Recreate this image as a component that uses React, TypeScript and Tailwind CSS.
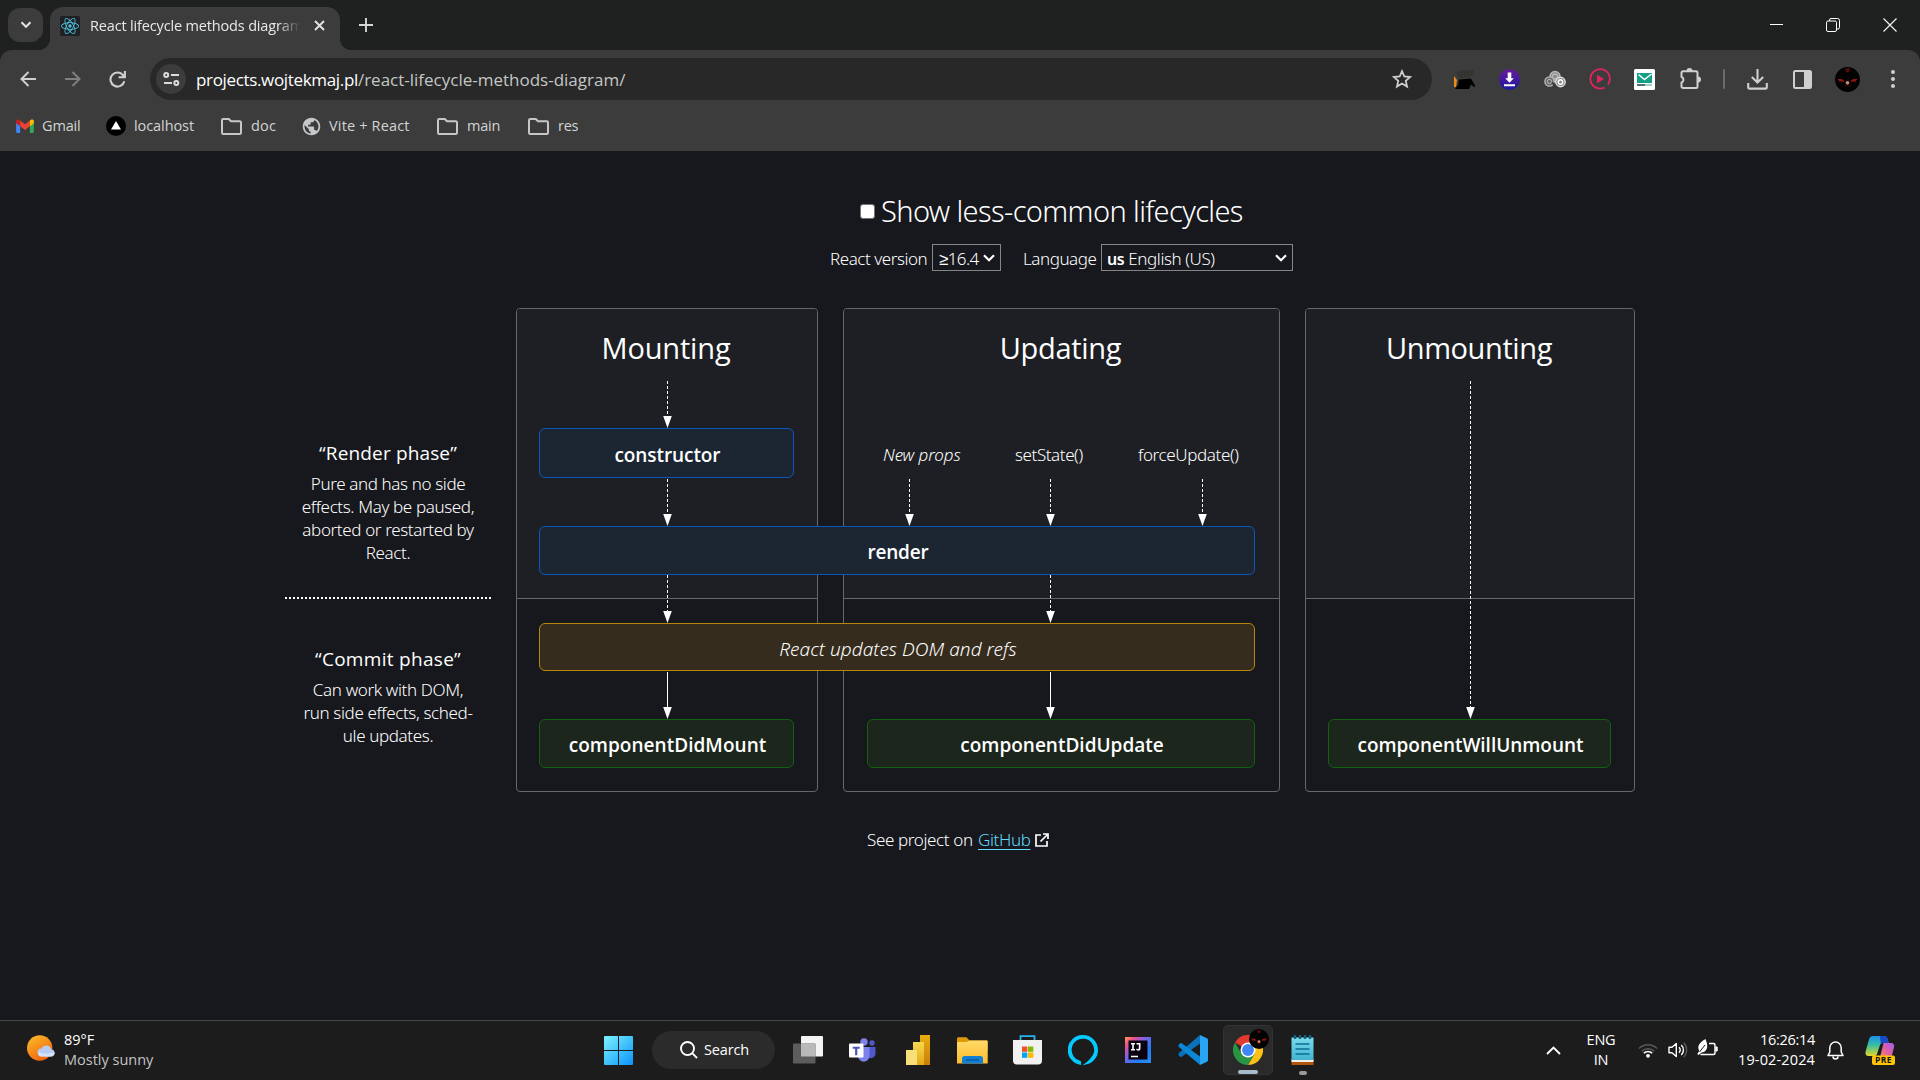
import type { ReactNode } from "react";
import { SiReact } from "react-icons/si";
import { MdPublic } from "react-icons/md";

/* ---------- small shared drawings ---------- */

function Avatar({ size }: { size: number }) {
  return (
    <svg width={size} height={size} viewBox="0 0 26 26">
      <circle cx="13" cy="13" r="13" fill="#020202" />
      <path d="M10.500 1.500h5l-1 4h-3z" fill="#5a0a0e" />
      <path d="M2.500 12.500 7 12.500l3 2-1 1.200-4-.7zM23.500 12.500 19 12.500l-3 2 1 1.200 4-.7z" fill="#8f1713" />
      <path d="M4 15.500l5-.5M22 15.500l-5-.5" stroke="#5c0a0a" />
      <circle cx="13" cy="16.500" r="1.900" fill="#c98a72" />
      <path d="M10 19.500h6" stroke="#3d0909" strokeWidth="1.200" />
    </svg>
  );
}

function Folder() {
  return (
    <svg width="21" height="17" viewBox="0 0 21 17" fill="none" stroke="#c7c7c7" strokeWidth="2" strokeLinejoin="round">
      <path d="M1 2.200C1 1.500 1.500 1 2.200 1h5.600l2.200 2.300h8.800c.7 0 1.200.5 1.200 1.200v10.300c0 .7-.5 1.200-1.200 1.200H2.200C1.500 16 1 15.500 1 14.800z" />
    </svg>
  );
}

function SelectChevron() {
  return (
    <svg width="12" height="8" viewBox="0 0 12 8" fill="none" stroke="#fff" strokeWidth="2.200">
      <path d="M1 1.200l5 5 5-5" />
    </svg>
  );
}

/* ---------- browser chrome ---------- */

function TabStrip() {
  return (
    <div className="flex h-[50px] shrink-0 bg-[#1f2020]">
      <div className="ml-2 mt-2 flex h-[34px] w-[35px] items-center justify-center rounded-[12px] bg-[#3c3c3c]">
        <svg width="12" height="8" viewBox="0 0 12 8" fill="none" stroke="#e3e3e3" strokeWidth="2">
          <path d="M1.500 1.300l4.500 4.500 4.500-4.500" />
        </svg>
      </div>
      <div className="flex w-[7px] flex-col justify-end">
        <div className="-ml-[5px] h-3 w-3 bg-[radial-gradient(circle_at_0_0,#1f2020_12px,#3c3c3c_12.500px)]" />
      </div>
      <div className="mt-[7px] flex h-[43px] w-[290px] items-center rounded-t-[13px] bg-[#3c3c3c] pb-[6px] pl-[10px]">
        <div className="flex h-5 w-5 items-center justify-center rounded-[2px] bg-[#1f2023]">
          <SiReact size={18} color="#4fc3e0" />
        </div>
        <div className="ml-[10px] w-[210px] overflow-hidden whitespace-nowrap text-[14.500px] leading-5 tracking-[-0.160px] text-[#e8e8e8] [mask-image:linear-gradient(90deg,#000_188px,transparent_210px)]">
          React lifecycle methods diagram
        </div>
        <svg className="ml-[14px]" width="11" height="11" viewBox="0 0 11 11" stroke="#e3e3e3" strokeWidth="1.900">
          <path d="M1 1l9 9M10 1l-9 9" />
        </svg>
      </div>
      <div className="flex flex-col justify-end">
        <div className="h-3 w-3 bg-[radial-gradient(circle_at_100%_0,#1f2020_12px,#3c3c3c_12.500px)]" />
      </div>
      <svg className="ml-[7px] mt-[18px]" width="14" height="14" viewBox="0 0 14 14" stroke="#d6d6d6" strokeWidth="1.900">
        <path d="M7 0v14M0 7h14" />
      </svg>
      <div className="ml-auto mt-[18px] flex h-[14px] pr-[22px]">
        <svg width="13" height="14" viewBox="0 0 13 14"><path d="M0 6.500h13" stroke="#fff" /></svg>
        <svg className="ml-[43px]" width="14" height="14" viewBox="0 0 14 14" fill="none" stroke="#fff">
          <rect x=".5" y="3" width="10" height="10.500" rx="1.500" />
          <path d="M3.500 3V2A1.500 1.500 0 0 1 5 .500h6.500A2 2 0 0 1 13.500 2.500v7A1.500 1.500 0 0 1 12 11h-1" />
        </svg>
        <svg className="ml-[43px] mr-px" width="14" height="14" viewBox="0 0 14 14" stroke="#f2f2f2" strokeWidth="1.200">
          <path d="M.5.500l13 13M13.500.500l-13 13" />
        </svg>
      </div>
    </div>
  );
}

function Cell({ children }: { children: ReactNode }) {
  return <div className="flex w-[45px] shrink-0 items-center justify-center">{children}</div>;
}

function Toolbar() {
  return (
    <div className="bg-[#1f2020]">
      <div className="flex h-[58px] items-center rounded-t-[12px] bg-[#3c3c3c] pl-[5px]">
        <Cell>
          <svg width="16" height="16" viewBox="0 0 16 16" fill="none" stroke="#cfcfcf" strokeWidth="2"><path d="M16 8H1.500M8.500 1L1.500 8l7 7" /></svg>
        </Cell>
        <Cell>
          <svg width="16" height="16" viewBox="0 0 16 16" fill="none" stroke="#7f7f7f" strokeWidth="2"><path d="M0 8h14.500M7.500 1l7 7-7 7" /></svg>
        </Cell>
        <Cell>
          <svg width="17" height="17" viewBox="0 0 17 17" fill="none" stroke="#cfcfcf" strokeWidth="2.100"><path d="M15.300 10.200A7 7 0 1 1 14 4.200l1.200 1.600M15.900 0v6.300H9.600" /></svg>
        </Cell>
        <div className="ml-[10px] flex h-[42px] w-[1282px] items-center rounded-full bg-[#282828] pl-[6px]">
          <div className="flex size-[30px] items-center justify-center rounded-full bg-[#3c3c3c]">
            <svg width="17" height="14" viewBox="0 0 17 14" fill="none" stroke="#dcdcdc" strokeWidth="2">
              <circle cx="3.200" cy="3" r="2" /><path d="M8 3h8M1 11h8" /><circle cx="13.300" cy="11" r="2" />
            </svg>
          </div>
          <div className="ml-[10px] pt-px text-[17px] leading-6">
            <span className="tracking-[-0.340px] text-white">projects.wojtekmaj.pl</span>
            <span className="text-[#c4c7c5]">/react-lifecycle-methods-diagram/</span>
          </div>
          <svg className="ml-auto mr-[20px]" width="20" height="20" viewBox="0 0 20 20" fill="none" stroke="#cfcfcf" strokeWidth="1.800">
            <path d="M10 2.200l2.350 5.300 5.750.55-4.350 3.850 1.300 5.700L10 14.600l-5.050 3 1.300-5.700L1.900 8.050l5.750-.55z" />
          </svg>
        </div>
        <div className="ml-[10px] mr-px flex">
          <Cell>
            <svg width="22" height="22" viewBox="0 0 22 22">
              <path d="M3 4l7-2 5 1 5-1-1 5-6 3H6L3 8z" fill="#333332" />
              <path d="M0 8l3 4-1 7H0z" fill="#f08a12" />
              <path d="M5 11.500l12-1 4 7v2l-4-3-2 4.500H1l3-4z" fill="#000" />
            </svg>
          </Cell>
          <Cell>
            <svg width="21" height="21" viewBox="0 0 21 21">
              <defs><linearGradient id="dl" x2="0" y2="1"><stop stopColor="#6a1b9a" /><stop offset="1" stopColor="#1a1a9c" /></linearGradient></defs>
              <circle cx="10.500" cy="10.500" r="10.500" fill="url(#dl)" />
              <path d="M8.700 3.500h3.600v5.700h2.500l-4.300 4.600-4.300-4.600h2.500zM5 15.300h11v1.900H5z" fill="#fff" />
            </svg>
          </Cell>
          <Cell>
            <svg width="22" height="18" viewBox="0 0 22 18" fill="none" stroke="#b9b9b9" strokeWidth="1.400">
              <circle cx="11" cy="6.500" r="5" fill="#8a8a8a" /><circle cx="11" cy="6.500" r="2.600" stroke="#d0d0d0" strokeWidth="1" />
              <circle cx="5.500" cy="11.500" r="4.600" fill="#6a6a6a" /><circle cx="5.500" cy="11.500" r="2.200" strokeWidth="1" />
              <circle cx="16.500" cy="12" r="4.700" fill="#8a8a8a" stroke="#e0e0e0" /><circle cx="16.500" cy="12" r="2.200" stroke="#fff" />
              <path d="M8 12.500l5 5" stroke="#3c3c3c" strokeWidth="2" />
            </svg>
          </Cell>
          <Cell>
            <svg width="22" height="22" viewBox="0 0 22 22" fill="none">
              <path d="M15.500 19.500A9.700 9.700 0 1 1 19 16.500" stroke="#e0245e" strokeWidth="1.800" />
              <path d="M8 6.500v9l7-4.500z" fill="#e0245e" />
            </svg>
          </Cell>
          <Cell>
            <svg width="21" height="21" viewBox="0 0 21 21">
              <rect width="21" height="21" rx="1.500" fill="#fff" />
              <rect x="3" y="4" width="15" height="10" fill="#14a085" />
              <path d="M4.500 5.500l6 5 7-5.500" fill="none" stroke="#fff" strokeWidth="1.500" />
              <path d="M3 16h8" stroke="#33475b" strokeWidth="1.600" /><path d="M11 16h7" stroke="#7fcabb" strokeWidth="1.600" />
            </svg>
          </Cell>
          <Cell>
            <svg width="22" height="22" viewBox="0 0 22 22">
              <path d="M2.500 9V4.800C2.500 3.900 3.200 3.300 4 3.300h13c.8 0 1.500.6 1.500 1.500V18.500c0 .8-.7 1.500-1.500 1.500H4c-.8 0-1.500-.7-1.500-1.500V14.500a2.900 2.900 0 0 0 0-5.500z" fill="none" stroke="#cfcfcf" strokeWidth="2" strokeLinejoin="round" />
              <path d="M7.500 3a3 3 0 0 1 6 0zM19 8.500a3 3 0 0 1 0 6z" fill="#cfcfcf" />
            </svg>
          </Cell>
        </div>
        <div className="ml-[10px] mr-[10px] h-5 w-[2px] rounded bg-[#6a6a6a]" />
        <Cell>
          <svg width="21" height="21" viewBox="0 0 21 21" fill="none" stroke="#cfcfcf" strokeWidth="2.100">
            <path d="M10.500 0v13M4.800 8l5.700 5.500L16.200 8M1.200 14v4c0 .9.500 1.600 1.400 1.600h15.800c.9 0 1.400-.7 1.400-1.600v-4" />
          </svg>
        </Cell>
        <Cell>
          <svg width="19" height="19" viewBox="0 0 19 19"><rect x="1" y="1" width="17" height="17" rx="1.500" fill="none" stroke="#cfcfcf" strokeWidth="2" /><path d="M11 1h7v17h-7z" fill="#cfcfcf" /></svg>
        </Cell>
        <Cell><Avatar size={25} /></Cell>
        <Cell>
          <svg width="4" height="20" viewBox="0 0 4 20" fill="#cfcfcf"><circle cx="2" cy="3" r="2" /><circle cx="2" cy="10" r="2" /><circle cx="2" cy="17" r="2" /></svg>
        </Cell>
      </div>
    </div>
  );
}

function BookmarksBar() {
  return (
    <div className="flex h-[43px] shrink-0 items-center bg-[#3c3c3c] pb-[7px] pl-[16px] text-[14.500px] leading-5 text-[#d2d4d3]">
      <div className="flex w-[90px] items-center">
        <svg width="18" height="14" viewBox="0 0 19 15">
          <path d="M0 3v10.700C0 14.400.5 15 1.200 15h3.100V6.500z" fill="#4285f4" />
          <path d="M19 3v10.700c0 .7-.5 1.300-1.200 1.300h-3.100V6.500z" fill="#34a853" />
          <path d="M4.300 1.700v6.100l5.200 3.900 5.200-3.900V1.700L9.500 5.600z" fill="#ea4335" />
          <path d="M0 2.200V4.500l4.300 3.300V1.700L3.500 1C2 0 0 .6 0 2.200z" fill="#c5221f" />
          <path d="M19 2.200V4.500l-4.300 3.300V1.700l.8-.7C17 0 19 .6 19 2.200z" fill="#fbbc04" />
        </svg>
        <span className="ml-[8px] tracking-[-0.150px]">Gmail</span>
      </div>
      <div className="flex w-[115px] items-center">
        <svg width="20" height="20" viewBox="0 0 20 20"><circle cx="10" cy="10" r="10" /><path d="M10 5l5 8.500H5z" fill="#fff" /></svg>
        <span className="ml-[8px] tracking-[-0.080px]">localhost</span>
      </div>
      <div className="flex w-[81px] items-center"><Folder /><span className="ml-[9px] tracking-[0.150px]">doc</span></div>
      <div className="flex w-[135px] items-center">
        <MdPublic className="-ml-px" size={21} color="#c4c7cc" />
        <span className="ml-[7px] tracking-[0.160px]">Vite + React</span>
      </div>
      <div className="flex w-[91px] items-center"><Folder /><span className="ml-[9px] tracking-[-0.250px]">main</span></div>
      <div className="flex items-center"><Folder /><span className="ml-[9px] tracking-[-0.300px]">res</span></div>
    </div>
  );
}

/* ---------- lifecycle diagram ---------- */

function Arrow({ solid = false }: { solid?: boolean }) {
  return (
    <div className="flex h-full w-[9px] flex-col items-center">
      <div
        className={
          solid
            ? "w-px flex-1 bg-white"
            : "w-px flex-1 bg-[repeating-linear-gradient(180deg,#fff_0px,#fff_3px,transparent_3px,transparent_5px)]"
        }
      />
      <svg className="-ml-px -mt-px shrink-0" width="9" height="12" viewBox="0 0 9 12"><path d="M.2 0h8.600L4.500 12z" fill="#fff" /></svg>
    </div>
  );
}

function Panel({ title, place, tracking }: { title: string; place: string; tracking: string }) {
  return (
    <section className={`row-start-1 row-span-11 overflow-hidden rounded-[4px] border border-[#66676b] ${place}`}>
      <div className="h-[290px] border-b border-[#66676b] bg-[#1e1f24]">
        <h2 className={`pr-[2px] text-center text-[29px] leading-[78px] ${tracking}`}>{title}</h2>
      </div>
    </section>
  );
}

function Node({ children, className }: { children: ReactNode; className: string }) {
  return (
    <div className={`flex items-center justify-center rounded-[6px] border pl-[2px] pt-[3px] text-[19px] leading-6 ${className}`}>{children}</div>
  );
}

const BLUE = "border-[#0b57b8] bg-[#1b2632] font-semibold";
const GREEN = "border-[#11620f] bg-[#1d261c] font-semibold";
const AMBER = "border-[#b8860b] bg-[#352c1d] font-['Noto_Sans',sans-serif] font-light italic";

function Diagram() {
  return (
    <div className="ml-[285px] mt-[37px] grid shrink-0 grid-cols-[206px_25px_23px_255px_24px_25px_24px_388px_25px_25px_23px_283px_24px] grid-rows-[73px_47px_50px_48px_49px_23px_25px_48px_48px_49px_24px]">
      <Panel title="Mounting" place="col-start-3 col-span-3" tracking="tracking-[-0.160px]" />
      <Panel title="Updating" place="col-start-7 col-span-3" tracking="tracking-[-0.280px]" />
      <Panel title="Unmounting" place="col-start-11 col-span-3" tracking="tracking-[-0.400px]" />

      <div className="col-start-1 row-start-3 row-span-4 mt-3 text-center">
        <h3 className="text-[19px] leading-[26px] tracking-[0.150px]">“Render phase”</h3>
        <p className="mt-[6px] font-['Noto_Sans',sans-serif] text-[17px] font-light leading-[23px] tracking-[-0.370px]">
          Pure and has no side<br />effects. May be paused,<br />aborted or restarted by<br />React.
        </p>
      </div>
      <div className="col-start-1 row-start-7 row-span-5 -mt-px text-center">
        <div className="h-[2px] bg-[repeating-linear-gradient(90deg,#fff_0px,#fff_2px,transparent_2px,transparent_4px)]" />
        <h3 className="mt-[47px] text-[19px] leading-[26px] tracking-[0.300px]">“Commit phase”</h3>
        <p className="mt-[6px] font-['Noto_Sans',sans-serif] text-[17px] font-light leading-[23px] tracking-[-0.370px]">
          Can work with DOM,<br />run side effects, sched-<br />ule updates.
        </p>
      </div>

      <div className="col-start-4 row-start-2 flex justify-center pl-0.5"><Arrow /></div>
      <div className="col-start-4 row-start-4 flex justify-center pl-0.5 pt-px"><Arrow /></div>
      <div className="col-start-4 row-start-6 row-span-2 flex justify-center pl-0.5"><Arrow /></div>
      <div className="col-start-4 row-start-9 flex justify-center pl-0.5 pt-px"><Arrow solid /></div>

      <div className="col-start-8 row-start-3 flex items-center pl-[16px] pt-[3px] font-['Noto_Sans',sans-serif] text-[17px] font-light leading-6">
        <span className="w-[132px] italic tracking-[-0.100px]">New props</span>
        <span className="w-[123px] tracking-[-0.420px]">setState()</span>
        <span className="tracking-[-0.370px]">forceUpdate()</span>
      </div>
      <div className="col-start-8 row-start-4 flex pl-[38px] pt-px">
        <Arrow />
        <div className="ml-[132px]"><Arrow /></div>
        <div className="ml-[143px]"><Arrow /></div>
      </div>
      <div className="col-start-8 row-start-6 row-span-2 pl-[179px]"><Arrow /></div>
      <div className="col-start-8 row-start-9 pl-[179px] pt-px"><Arrow solid /></div>

      <div className="col-start-12 row-start-2 row-span-8 flex justify-center pl-0.5"><Arrow /></div>

      <Node className={`col-start-4 row-start-3 tracking-[-0.080px] ${BLUE}`}>constructor</Node>
      <Node className={`col-start-4 col-span-5 row-start-5 tracking-[-0.200px] ${BLUE}`}>render</Node>
      <Node className={`col-start-4 col-span-5 row-start-8 tracking-[0.040px] ${AMBER}`}>React updates DOM and refs</Node>
      <Node className={`col-start-4 row-start-10 tracking-[0.040px] ${GREEN}`}>componentDidMount</Node>
      <Node className={`col-start-8 row-start-10 ${GREEN}`}>componentDidUpdate</Node>
      <Node className={`col-start-12 row-start-10 tracking-[-0.030px] ${GREEN}`}>componentWillUnmount</Node>
    </div>
  );
}

function Page() {
  return (
    <main className="flex flex-1 flex-col bg-[#17181d] pt-[38px] text-white">
      <label className="ml-[860px] flex h-10 shrink-0 items-center">
        <span className="mt-[5px] size-[15px] rounded-[3px] border border-[#767676] bg-white" />
        <span className="ml-[6px] whitespace-nowrap pt-[3px] font-['Noto_Sans',sans-serif] text-[29px] font-light leading-10 tracking-[-0.620px]">Show less-common lifecycles</span>
      </label>
      <div className="ml-[830px] mt-[15px] flex h-[27px] shrink-0 items-center font-['Noto_Sans',sans-serif] text-[17px] font-light leading-6">
        <span className="w-[102px] pt-0.5 tracking-[-0.450px]">React version</span>
        <div className="flex h-[27px] w-[69px] items-center justify-between border border-[#858585] pl-[6px] pr-[5px]">
          <span className="pt-0.5 tracking-[-0.600px]">≥16.4</span>
          <SelectChevron />
        </div>
        <span className="ml-[22px] w-[78px] pt-0.5 tracking-[-0.450px]">Language</span>
        <div className="flex h-[27px] w-[192px] items-center justify-between border border-[#858585] pl-[5px] pr-[5px]">
          <span className="pt-0.5 tracking-[-0.400px]"><b className="text-[16px] font-semibold">us</b> English (US)</span>
          <SelectChevron />
        </div>
      </div>
      <Diagram />
      <p className="ml-[867px] mt-[36px] flex items-center font-['Noto_Sans',sans-serif] text-[17px] font-light leading-6 tracking-[-0.370px]">
        <span className="w-[111px]">See project on</span>
        <a className="w-[52px] text-[#61dafb] underline decoration-1 underline-offset-[3px]" href="#github">GitHub</a>
        <svg className="ml-[5px]" width="14" height="14" viewBox="0 0 14 14" fill="none" stroke="#fff" strokeWidth="1.700">
          <path d="M6 2H1v11h11V8M8 1h5v5M13 1L5.500 8.500" />
        </svg>
      </p>
    </main>
  );
}

/* ---------- taskbar ---------- */

function App55({ children }: { children: ReactNode }) {
  return <div className="flex w-[55px] items-center justify-center pb-px">{children}</div>;
}

function ChromeLogo() {
  return (
    <svg width="30" height="30" viewBox="0 0 48 48">
      <path d="M24 24L3.200 12A24 24 0 0 1 44.800 12z" fill="#e33b2e" />
      <path d="M24 12h20.800A24 24 0 0 1 24 48l10.400-18z" fill="#fbc116" />
      <path d="M24 24L13.600 30 3.200 12A24 24 0 0 0 24 48l10.400-18z" fill="#2a9445" />
      <circle cx="24" cy="24" r="12" fill="#fff" />
      <circle cx="24" cy="24" r="9.500" fill="#4285f4" />
    </svg>
  );
}

function TaskbarApps() {
  return (
    <>
      <App55>
        <svg width="29" height="29" viewBox="0 0 29 29">
          <defs><linearGradient id="win" x2="1" y2="1"><stop stopColor="#7df3ff" /><stop offset="1" stopColor="#0a93fb" /></linearGradient></defs>
          <path d="M1 0h13v14H0V1a1 1 0 0 1 1-1zM15 0h13a1 1 0 0 1 1 1v13H15zM0 15h14v14H1a1 1 0 0 1-1-1zM15 15h14v13a1 1 0 0 1-1 1H15z" fill="url(#win)" />
        </svg>
      </App55>
      <div className="-mt-px ml-[6px] mr-[5px] flex h-[38px] w-[123px] items-center rounded-full bg-[#2b2b2b] pl-[28px] text-white">
        <svg width="18" height="18" viewBox="0 0 18 18" fill="none" stroke="#fff" strokeWidth="1.900"><circle cx="7.500" cy="7.500" r="6.500" /><path d="M12.200 12.200L17 17" /></svg>
        <span className="ml-[6px] text-[14.500px] leading-5 tracking-[-0.150px]">Search</span>
      </div>
      <App55>
        <svg width="30" height="28" viewBox="0 0 30 28">
          <rect x="8" width="22" height="20.500" rx="1" fill="#f4f4f4" />
          <rect y="7.500" width="22.500" height="20" rx="1" fill="#5c5c5c" />
          <path d="M8 7.500h14.500v13H8z" fill="#b9b9b9" />
        </svg>
      </App55>
      <App55>
        <svg width="27" height="24" viewBox="0 0 27 24">
          <circle cx="15" cy="4" r="3.700" fill="#7b83eb" /><circle cx="23" cy="5" r="2.700" fill="#5059c9" />
          <path d="M19 9h7.500v7a4.500 4.500 0 0 1-7.500 3z" fill="#5059c9" />
          <path d="M9 9h11.500v9a5.700 5.700 0 0 1-11.500 0z" fill="#7b83eb" />
          <rect y="5.500" width="14.500" height="14" rx="1" fill="#fff" />
          <path d="M3.700 8.800h7v2H8.300v6.400H6.100v-6.400H3.700z" fill="#4b53bc" />
        </svg>
      </App55>
      <App55>
        <svg width="24" height="30" viewBox="0 0 24 30">
          <defs>
            <linearGradient id="pb1" x2="0" y2="1"><stop stopColor="#e8ad0e" /><stop offset="1" stopColor="#c87e0d" /></linearGradient>
            <linearGradient id="pb2" x2="0" y2="1"><stop stopColor="#f6d751" /><stop offset="1" stopColor="#e5a912" /></linearGradient>
          </defs>
          <path d="M14 0h10v30H14z" fill="url(#pb1)" /><path d="M7 7h11v23H7z" fill="url(#pb2)" /><path d="M0 15h11v15H0z" fill="#f7e07a" />
        </svg>
      </App55>
      <App55>
        <svg width="31" height="27" viewBox="0 0 31 27">
          <defs><linearGradient id="fe" x2="0" y2="1"><stop stopColor="#ffd968" /><stop offset="1" stopColor="#fdbd2c" /></linearGradient></defs>
          <path d="M0 2C0 .7.700.200 1.500.200h8L12.500 3.500H29.500c.8 0 1 .7 1 1.500v8H0z" fill="#dd9a06" />
          <path d="M0 5h9.500l3-1.500H29.500c.8 0 1.200.5 1.200 1.300V26.500H0z" fill="url(#fe)" />
          <path d="M5 26.500v-5c0-1.500 1-2.500 2.500-2.500h16c1.500 0 2.500 1 2.500 2.500v5z" fill="#1180d2" />
          <path d="M9 23h13" stroke="#0a4f93" strokeWidth="1.200" />
        </svg>
      </App55>
      <App55>
        <svg width="29" height="30" viewBox="0 0 29 30">
          <path d="M7.500 6V1.200h14V6" fill="none" stroke="#26b4f2" strokeWidth="1.800" />
          <path d="M0 5h29v20.500A4 4 0 0 1 25 29.500H4a4 4 0 0 1-4-4z" fill="#f1f1f1" />
          <path d="M9 11.500h5.300v5.300H9z" fill="#f25022" /><path d="M15 11.500h5.300v5.300H15z" fill="#7fba00" />
          <path d="M9 17.500h5.300v5.300H9z" fill="#00a4ef" /><path d="M15 17.500h5.300v5.300H15z" fill="#ffb900" />
        </svg>
      </App55>
      <App55>
        <svg width="30" height="30" viewBox="0 0 30 30">
          <path d="M15 0a15 15 0 0 0-2 29.900v-3c0-.4-.2-.7-.6-.9A11.300 11.300 0 1 1 26.200 16C25.500 21 20 27 14.500 30H15a15 15 0 0 0 0-30z" fill="#05caff" />
        </svg>
      </App55>
      <App55>
        <svg width="26" height="26" viewBox="0 0 26 26">
          <defs>
            <linearGradient id="ij" x2="1" y2="1"><stop stopColor="#fca03c" /><stop offset=".18" stopColor="#f0508c" /><stop offset=".42" stopColor="#7a64e8" /><stop offset=".7" stopColor="#1f7df0" /><stop offset="1" stopColor="#2f8bf5" /></linearGradient>
          </defs>
          <path d="M0 0h26v26H0z" fill="url(#ij)" />
          <path d="M3.500 3.500h19v19h-19z" fill="#0a0210" />
          <path d="M6 6h4v1.500H8.800v4.500H10v1.500H6V12h1.200V7.500H6zM11.500 6h4v5.200c0 1.700-.9 2.500-2.300 2.500-1 0-1.700-.4-2.200-1.100l1-1c.3.400.6.600 1 .6.600 0 .8-.4.800-1.100V7.500h-2.300zM6 18.700h7v1.500H6z" fill="#fff" />
        </svg>
      </App55>
      <App55>
        <svg width="30" height="30" viewBox="0 0 30 30">
          <path d="M.6 18.200L22 0v8.500L3 22.200.6 20.500z" fill="#0a72bd" />
          <path d="M.6 11.800L22 30v-8.500L3 7.800.6 9.500z" fill="#0c86d6" />
          <path d="M22 0l7 3.200c.6.3 1 .9 1 1.500v20.600c0 .6-.4 1.200-1 1.500L22 30z" fill="#2aa5f5" />
        </svg>
      </App55>
      <div className="flex w-[55px] items-center justify-center pb-px">
        <div className="relative flex h-[50px] w-[50px] items-center justify-center rounded-[5px] border border-[#333] bg-[#2a2a2a]">
          <ChromeLogo />
          <div className="absolute right-[3px] top-[3px]"><Avatar size={20} /></div>
          <div className="absolute bottom-0 left-[14px] h-1 w-5 rounded-full bg-[#a9bac8]" />
        </div>
      </div>
      <div className="relative -mt-px flex h-[50px] w-[55px] items-center justify-center">
        <svg width="23" height="30" viewBox="0 0 23 30">
          <defs><linearGradient id="np" x2="0" y2="1"><stop stopColor="#7adcee" /><stop offset="1" stopColor="#42b3d0" /></linearGradient></defs>
          <path d="M.5 25h22v5h-22z" fill="#b1560f" /><path d="M.5 24h22v3h-22z" fill="#f5f0ea" />
          <path d="M.5 2.500h22v22.500h-22z" fill="url(#np)" />
          <path d="M4.500 9h14M4.500 14h14M4.500 19h14" stroke="#0b6f92" strokeWidth="1.700" />
          <path d="M4 0v4M9 0v4M14 0v4M19 0v4" stroke="#0c627f" strokeWidth="2.200" />
        </svg>
        <div className="absolute bottom-0 left-[24px] h-1 w-2 rounded-full bg-[#9a9a9a]" />
      </div>
    </>
  );
}

function Tray() {
  return (
    <div className="ml-auto flex items-center pb-px pr-6 text-[14.500px] leading-5 text-white">
      <svg width="15" height="9" viewBox="0 0 15 9" fill="none" stroke="#fff" strokeWidth="1.900"><path d="M1 8l6.500-6.500L14 8" /></svg>
      <div className="ml-[25px] w-[30px] text-center tracking-[-0.180px]">ENG<br />IN</div>
      <svg className="ml-[22px]" width="20" height="16" viewBox="0 0 20 16" fill="none" strokeWidth="1.500">
        <path d="M1 6.500a12.700 12.700 0 0 1 18 0" stroke="#5a5a5a" /><path d="M3.700 9.200a9 9 0 0 1 12.600 0" stroke="#5a5a5a" />
        <path d="M5.800 11.200a6 6 0 0 1 8.400 0" stroke="#fff" /><circle cx="10" cy="13.800" r="1.900" fill="#fff" />
      </svg>
      <svg className="ml-[10px]" width="20" height="18" viewBox="0 0 20 18" fill="none" stroke="#fff" strokeWidth="1.400" strokeLinejoin="round">
        <path d="M1 6.300h3L8.300 2.500v13L4 11.700H1z" /><path d="M11 6.300a4 4 0 0 1 0 5.400M13.300 4a7 7 0 0 1 0 10" /><path d="M15.800 1.800a10.500 10.500 0 0 1 0 14.400" stroke="#5a5a5a" />
      </svg>
      <svg className="-mt-1 ml-[9px] mr-px" width="21" height="18" viewBox="0 0 21 18" fill="none">
        <path d="M12 4.500h4.500c.9 0 1.500.7 1.500 1.500v8c0 .9-.7 1.500-1.500 1.500H3.500" stroke="#fff" strokeWidth="1.500" />
        <path d="M19 8h1.200v4H19z" fill="#fff" stroke="#fff" />
        <path d="M8.500 0c1 3 2 5 1.700 8-.3 3-2.500 5.300-5.200 5.300L1.500 16 .3 15l2-3C-.5 7.500 3 3 8.500 0z" fill="#fff" />
        <path d="M8 6L2.500 13" stroke="#1c1c1c" />
      </svg>
      <div className="ml-4 w-20 text-right"><span className="tracking-[-0.300px]">16:26:14</span><br /><span className="tracking-[0.130px]">19-02-2024</span></div>
      <svg className="ml-3" width="17" height="19" viewBox="0 0 17 19" fill="none" stroke="#fff" strokeWidth="1.500" strokeLinejoin="round">
        <path d="M8.500 1a5.700 5.700 0 0 0-5.700 5.700v4.300L1 14.500h15L14.200 11V6.700A5.700 5.700 0 0 0 8.500 1zM6 15.500a2.500 2.500 0 0 0 5 0" />
      </svg>
      <svg className="ml-[21px] mr-px" width="30" height="29" viewBox="0 0 30 29">
        <defs>
          <linearGradient id="cpA" x2="0" y2="1"><stop stopColor="#1c8df0" /><stop offset=".45" stopColor="#35bfa0" /><stop offset="1" stopColor="#e5d62a" /></linearGradient>
          <linearGradient id="cpB" x1="1" x2="0" y2="1"><stop stopColor="#a45cf5" /><stop offset=".5" stopColor="#e2609e" /><stop offset="1" stopColor="#f79a4c" /></linearGradient>
        </defs>
        <path d="M8 0h11c2 0 3 1 3.600 3l1.200 4h-6c-1.500 0-2.500 1-3 2.500L12 18c-.5 1.500-1.500 2-3 2H3.500C1 20 0 18 .6 15.500L4 3.500C4.700 1 6 0 8 0z" fill="url(#cpA)" />
        <path d="M15 0h4c2 0 3 1 3.600 3l1.200 4h-6c-1 0-1.500.3-2 1z" fill="#1b49c6" />
        <path d="M18.500 7h7.500c2.500 0 3.700 1.700 3 4.300L27 19c-.5 2-1.500 3-3.500 3H13c1.500 0 2-1 2.500-2.500L18 9z" fill="url(#cpB)" />
        <rect x="7" y="19.500" width="23" height="9.500" rx="2" fill="#fdc50a" />
        <text x="18.500" y="27.300" textAnchor="middle" fontSize="8.500" fontWeight="700" letterSpacing=".4" fontFamily="Open Sans, sans-serif" fill="#111">PRE</text>
      </svg>
    </div>
  );
}

function Taskbar() {
  return (
    <footer className="flex h-[60px] shrink-0 items-center border-t border-[#45464a] bg-[#1c1c1c]">
      <div className="flex w-[591px] items-center pl-[27px] text-[14.500px] leading-5">
        <svg className="-mt-1" width="29" height="27" viewBox="0 0 29 27">
          <defs><linearGradient id="sun" x2=".6" y2="1"><stop stopColor="#fbc02d" /><stop offset="1" stopColor="#f2640c" /></linearGradient></defs>
          <circle cx="12.700" cy="13" r="12.700" fill="url(#sun)" />
          <path d="M14.500 21.500a4 4 0 0 1 0-8 5.300 5.300 0 0 1 9.800.7 3.700 3.700 0 0 1 .2 7.300z" fill="#b7cdf5" />
          <path d="M14.500 21.500a3 3 0 0 1-2.500-4.500c3 2 10 2.500 15.500 0a3.700 3.700 0 0 1-3 4.500z" fill="#d5e2fb" />
        </svg>
        <div className="-mt-0.5 ml-[8px]">
          <div className="text-white">89°F</div>
          <div className="text-[#c4c4c4]">Mostly sunny</div>
        </div>
      </div>
      <TaskbarApps />
      <Tray />
    </footer>
  );
}

export default function App() {
  return (
    <div className="flex h-[1080px] w-[1920px] flex-col overflow-hidden font-['Open_Sans','Noto_Sans',sans-serif]">
      <TabStrip />
      <Toolbar />
      <BookmarksBar />
      <Page />
      <Taskbar />
    </div>
  );
}
